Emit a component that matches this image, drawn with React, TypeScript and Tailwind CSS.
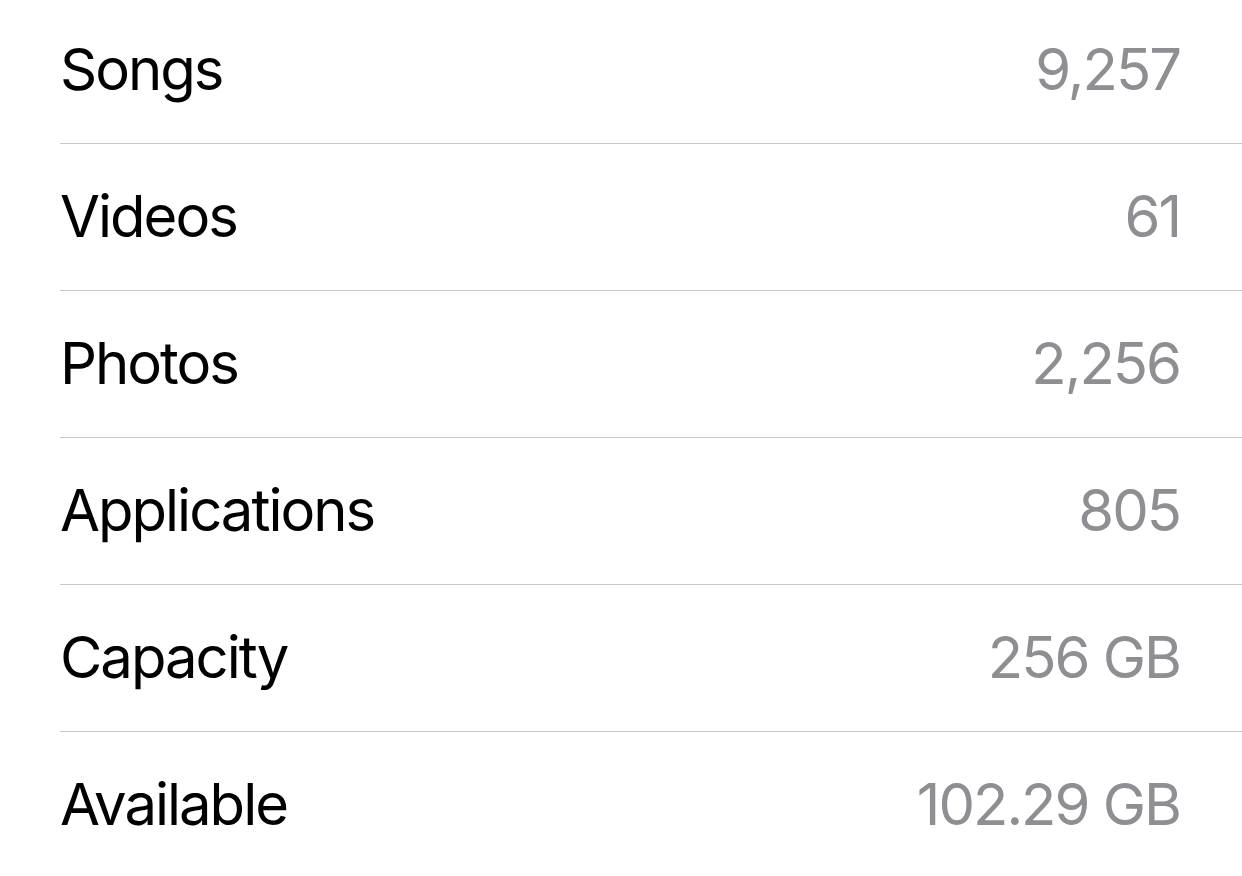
const rows = [
  { label: 'Songs', value: '9,257' },
  { label: 'Videos', value: '61' },
  { label: 'Photos', value: '2,256' },
  { label: 'Applications', value: '805' },
  { label: 'Capacity', value: '256 GB' },
  { label: 'Available', value: '102.29 GB' },
];

export default function App() {
  return (
    <div
      className="w-[1242px] h-[876px] overflow-hidden bg-white"
      style={{ fontFamily: 'Inter, "Noto Sans", sans-serif' }}
    >
      <div className="-mt-[3px] ml-[60px]">
        {rows.map((row, i) => (
          <div
            key={row.label}
            className={`flex items-center justify-between h-[147px] pb-[2px] pr-[62px] ${
              i < rows.length - 1 ? 'border-b border-[#c8c7cc]' : ''
            }`}
          >
            <span className="text-[58px] text-black tracking-[-2px]">{row.label}</span>
            <span className="text-[58px] text-[#8e8e93] tracking-[-2px]">{row.value}</span>
          </div>
        ))}
      </div>
    </div>
  );
}
